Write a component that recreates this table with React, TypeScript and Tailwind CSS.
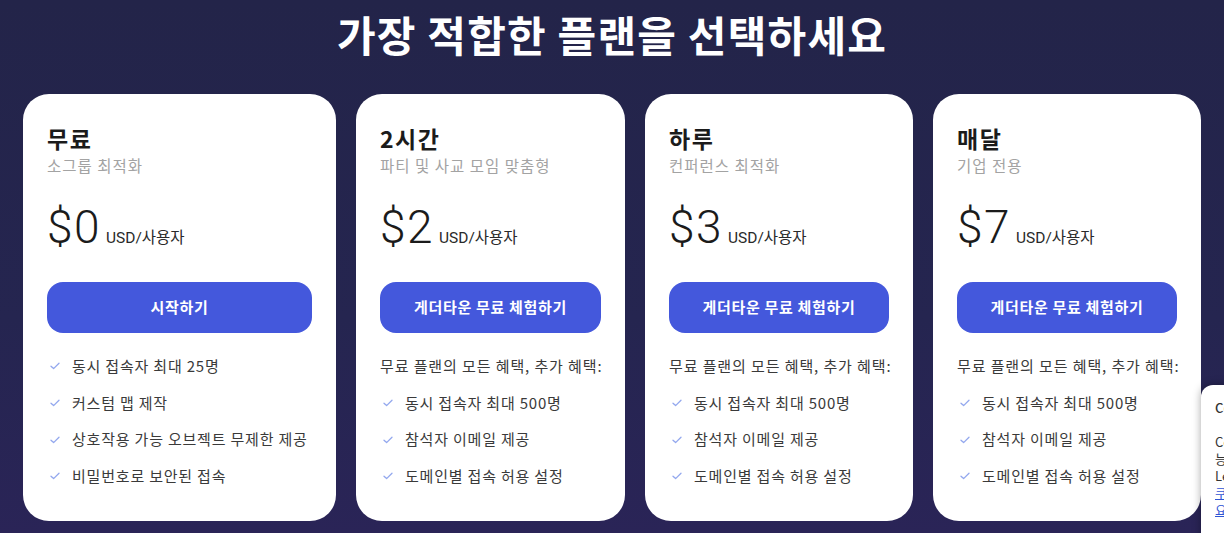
import React from "react";

type Plan = {
  name: string;
  sub: string;
  price: string;
  cta: string;
  intro?: string;
  items: string[];
  w: string;
};

const plans: Plan[] = [
  {
    name: "무료",
    sub: "소그룹 최적화",
    price: "$0",
    cta: "시작하기",
    items: ["동시 접속자 최대 25명", "커스텀 맵 제작", "상호작용 가능 오브젝트 무제한 제공", "비밀번호로 보안된 접속"],
    w: "w-[313px]",
  },
  {
    name: "2시간",
    sub: "파티 및 사교 모임 맞춤형",
    price: "$2",
    cta: "게더타운 무료 체험하기",
    intro: "무료 플랜의 모든 혜택, 추가 혜택:",
    items: ["동시 접속자 최대 500명", "참석자 이메일 제공", "도메인별 접속 허용 설정"],
    w: "w-[269px]",
  },
  {
    name: "하루",
    sub: "컨퍼런스 최적화",
    price: "$3",
    cta: "게더타운 무료 체험하기",
    intro: "무료 플랜의 모든 혜택, 추가 혜택:",
    items: ["동시 접속자 최대 500명", "참석자 이메일 제공", "도메인별 접속 허용 설정"],
    w: "w-[268px]",
  },
  {
    name: "매달",
    sub: "기업 전용",
    price: "$7",
    cta: "게더타운 무료 체험하기",
    intro: "무료 플랜의 모든 혜택, 추가 혜택:",
    items: ["동시 접속자 최대 500명", "참석자 이메일 제공", "도메인별 접속 허용 설정"],
    w: "w-[268px]",
  },
];

const Check = () => (
  <svg width="10" height="8" viewBox="0 0 10 8" fill="none" className="shrink-0">
    <path d="M1 4.2 L3.6 6.6 L9 1.2" stroke="#93a8ee" strokeWidth="1.3" strokeLinecap="round" strokeLinejoin="round" />
  </svg>
);

const KR = "font-['Noto_Sans_CJK_KR','Noto_Sans',sans-serif]";

function Card({ p }: { p: Plan }) {
  return (
    <div className={`${p.w} shrink-0 h-[427px] bg-white rounded-[26px] px-6 pt-[29px] flex flex-col ${KR}`}>
      <div className="text-[23px] leading-[30px] font-bold text-[#1b1b1b] tracking-[1.5px]">{p.name}</div>
      <div className="text-[15.5px] leading-[20px] text-[#a3a3a3] mt-[2px] tracking-[1px] whitespace-nowrap">{p.sub}</div>
      <div className="flex items-baseline mt-[28px] h-[48px]">
        <span className="font-['Roboto',sans-serif] font-light text-[46px] leading-[48px] text-[#1b1b1b] tracking-[1.5px]">
          {p.price}
        </span>
        <span className="ml-[5px] text-[15.5px] text-[#2a2a2a] font-['Roboto','Noto_Sans_CJK_KR',sans-serif] whitespace-nowrap">
          USD/사용자
        </span>
      </div>
      <button className="mt-[31px] h-[51px] w-full rounded-[16px] bg-[#4458dc] text-white font-bold text-[15px] tracking-[0.7px]">
        {p.cta}
      </button>
      <div className="mt-[15px] flex flex-col">
        {p.intro && (
          <div className="h-[36.7px] flex items-center text-[15px] tracking-[0.9px] text-[#3a3a3a] whitespace-nowrap">
            {p.intro}
          </div>
        )}
        {p.items.map((it) => (
          <div key={it} className="h-[36.7px] flex items-center text-[15px] tracking-[0.8px] text-[#3a3a3a] whitespace-nowrap">
            <span className="w-[25px] pl-[3px] flex items-center">
              <Check />
            </span>
            <span>{it}</span>
          </div>
        ))}
      </div>
    </div>
  );
}

export default function App() {
  return (
    <div className="relative w-[1224px] h-[533px] overflow-hidden bg-[linear-gradient(180deg,#232449_0%,#252550_60%,#2a2457_100%)]">
      <h1 className={`text-center text-white font-bold text-[42px] leading-[50px] pt-[9px] tracking-[1.2px] ${KR}`}>
        가장 적합한 플랜을 선택하세요
      </h1>
      <div className="flex justify-center gap-5 mt-[35px]">
        {plans.map((p) => (
          <Card key={p.name} p={p} />
        ))}
      </div>
      <div
        className={`absolute left-[1201px] top-[385px] w-[300px] h-[200px] bg-white rounded-tl-[12px] shadow-[0_0_8px_rgba(0,0,0,0.35)] pl-[14px] pt-[14px] text-[13px] leading-[17px] text-[#333] ${KR}`}
      >
        <div className="font-medium whitespace-nowrap">Cookie 설정</div>
        <div className="mt-[17px] whitespace-nowrap">Cookie를 사용하여</div>
        <div className="whitespace-nowrap">능률적인 서비스를</div>
        <div className="whitespace-nowrap">Learn more</div>
        <div className="whitespace-nowrap text-[#2f55d4] underline">쿠키 정책</div>
        <div className="whitespace-nowrap text-[#2f55d4] underline">요약 보기</div>
      </div>
    </div>
  );
}
